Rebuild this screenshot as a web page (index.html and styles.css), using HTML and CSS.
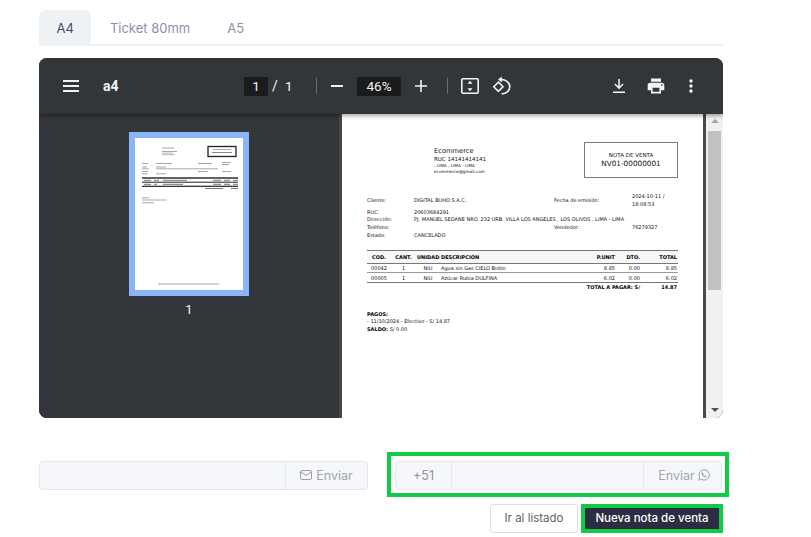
FILE: index.html
```html
<!DOCTYPE html>
<html lang="es">
<head>
    <meta charset="UTF-8">
    <title>Nota de venta</title>
    <link rel="stylesheet" href="styles.css">
</head>
<body>
    <div class="container">
        <div class="tabs">
            <div class="tab active">A4</div>
            <div class="tab">Ticket 80mm</div>
            <div class="tab">A5</div>
        </div>

        <div class="viewer">
            <div class="toolbar">
                <div class="toolbar-left">
                    <svg class="icon-menu" width="24" height="24" viewBox="0 0 24 24"><path fill="#f1f3f4" d="M4 18h16v-2H4v2zm0-5h16v-2H4v2zm0-7v2h16V6H4z"/></svg>
                    <span class="doc-title">a4</span>
                </div>
                <div class="toolbar-center">
                    <span class="num-box page-box">1</span>
                    <span class="slash">/</span>
                    <span class="page-total">1</span>
                    <span class="sep"></span>
                    <svg width="14" height="14" viewBox="0 0 14 14"><path fill="#f1f3f4" d="M1 6h12v2H1z"/></svg>
                    <span class="num-box zoom-box">46%</span>
                    <svg width="14" height="14" viewBox="0 0 14 14"><path fill="#f1f3f4" d="M6.200 1h1.600v5.200H13v1.600H7.800V13H6.200V7.800H1V6.200h5.200z"/></svg>
                    <span class="sep sep-right"></span>
                    <svg class="icon-fit" width="20" height="18" viewBox="0 0 20 18"><rect x="1.800" y="1.800" width="16.400" height="14.400" rx="1.200" fill="none" stroke="#f1f3f4" stroke-width="1.600"/><path fill="#f1f3f4" d="M10 3.800l2.500 3h-5zM10 14.200l-2.500-3h5z"/></svg>
                    <svg class="icon-rotate" width="20" height="20" viewBox="0 0 20 20"><path fill="none" stroke="#f1f3f4" stroke-width="1.600" d="M1.800 10.800l4.600-4.600 4.600 4.600-4.600 4.600z"/><path fill="none" stroke="#f1f3f4" stroke-width="1.600" d="M8 3.800c5.400-.9 9.800 2.500 9.800 7 0 4.200-3.800 7.300-8.300 6.900"/><path fill="#f1f3f4" d="M9.800.6v6L6 3.600z"/></svg>
                </div>
                <div class="toolbar-right">
                    <svg class="icon-download" width="16" height="16" viewBox="0 0 16 16"><path fill="#f1f3f4" d="M7.200 1h1.600v7.200l2.700-2.700 1.100 1.100L8 11.200 3.400 6.600l1.100-1.100 2.700 2.700zM2 13.400h12V15H2z"/></svg>
                    <svg class="icon-print" width="20" height="20" viewBox="0 0 24 24"><path fill="#f1f3f4" d="M19 8H5c-1.660 0-3 1.340-3 3v6h4v4h12v-4h4v-6c0-1.660-1.340-3-3-3zm-3 11H8v-5h8v5zm3-7c-.55 0-1-.45-1-1s.45-1 1-1 1 .45 1 1-.45 1-1 1zm-1-9H6v4h12V3z"/></svg>
                    <svg width="6" height="16" viewBox="0 0 6 16"><circle cx="3" cy="3" r="1.700" fill="#f1f3f4"/><circle cx="3" cy="8" r="1.700" fill="#f1f3f4"/><circle cx="3" cy="13" r="1.700" fill="#f1f3f4"/></svg>
                </div>
            </div>

            <div class="viewer-body">
                <div class="sidebar">
                    <div class="thumb">
                        <svg width="108" height="152" viewBox="0 0 108 152">
                            <g fill="#a8a8a8">
                                <rect x="27" y="9.500" width="12" height="1"/>
                                <rect x="27" y="13" width="15" height="1"/>
                                <rect x="27" y="14.700" width="11" height=".8"/>
                                <rect x="27" y="16.300" width="13" height=".8"/>
                                <rect x="7" y="25" width="6" height="1"/>
                                <rect x="21" y="25" width="16" height="1"/>
                                <rect x="63" y="25" width="14" height="1"/>
                                <rect x="87" y="24" width="9" height="1"/>
                                <rect x="87" y="26" width="7" height="1"/>
                                <rect x="7" y="28.500" width="5" height="1"/>
                                <rect x="21" y="28.500" width="10" height="1"/>
                                <rect x="7" y="30.300" width="7" height="1"/>
                                <rect x="21" y="30.300" width="62" height="1"/>
                                <rect x="7" y="33" width="6" height="1"/>
                                <rect x="63" y="33" width="10" height="1"/>
                                <rect x="87" y="33" width="9" height="1"/>
                                <rect x="7" y="35.300" width="6" height="1"/>
                                <rect x="21" y="35.300" width="10" height="1"/>
                                <rect x="7" y="59.300" width="7" height="1"/>
                                <rect x="7" y="61.500" width="25" height="1"/>
                                <rect x="7" y="64.300" width="12" height="1"/>
                                <rect x="23" y="145.500" width="61" height="1"/>
                            </g>
                            <g fill="#777">
                                <rect x="9" y="41.800" width="7" height="1"/>
                                <rect x="19" y="41.800" width="5" height="1"/>
                                <rect x="28" y="41.800" width="24" height="1"/>
                                <rect x="78" y="41.800" width="8" height="1"/>
                                <rect x="89" y="41.800" width="6" height="1"/>
                                <rect x="98" y="41.800" width="5" height="1"/>
                                <rect x="9" y="45.800" width="7" height="1"/>
                                <rect x="19" y="45.800" width="3" height="1"/>
                                <rect x="28" y="45.800" width="20" height="1"/>
                                <rect x="78" y="45.800" width="8" height="1"/>
                                <rect x="89" y="45.800" width="6" height="1"/>
                                <rect x="98" y="45.800" width="5" height="1"/>
                                <rect x="70" y="50" width="18" height="1"/>
                                <rect x="96" y="50" width="7" height="1"/>
                            </g>
                            <g fill="#222">
                                <rect x="7" y="39.300" width="96" height="1.400"/>
                                <rect x="7" y="43.700" width="96" height="1"/>
                                <rect x="7" y="47.700" width="96" height="1.200"/>
                            </g>
                            <rect x="73" y="8.500" width="28" height="10" fill="#fff" stroke="#222" stroke-width="1.300"/>
                            <rect x="78" y="11" width="18" height="1" fill="#aaa"/>
                            <rect x="77" y="14" width="20" height="1" fill="#888"/>
                        </svg>
                    </div>
                    <div class="thumb-num">1</div>
                </div>

                <div class="doc-area">
                    <div class="doc">
                        <div class="doc-head">
                            <div class="company">
                                <div class="company-name">Ecommerce</div>
                                <div class="company-ruc">RUC 14141414141</div>
                                <div class="company-line">, LIMA , LIMA - LIMA</div>
                                <div class="company-line">ecommerce@gmail.com</div>
                            </div>
                            <div class="doc-box">
                                <div class="doc-box-type">NOTA DE VENTA</div>
                                <div class="doc-box-num">NV01-00000001</div>
                            </div>
                        </div>

                        <table class="info">
                            <tr><td class="c1">Cliente:</td><td class="c2">DIGITAL BUHO S.A.C.</td><td class="c3">Fecha de emisión:</td><td class="c4">2024-10-11 /<br>18:08:53</td></tr>
                            <tr><td>RUC:</td><td colspan="3">20603684291</td></tr>
                            <tr><td>Dirección:</td><td colspan="3">PJ. MANUEL SEOANE NRO. 232 URB. VILLA LOS ANGELES , LOS OLIVOS , LIMA - LIMA</td></tr>
                            <tr><td>Teléfono:</td><td></td><td>Vendedor:</td><td>76279327</td></tr>
                            <tr><td>Estado:</td><td colspan="3">CANCELADO</td></tr>
                        </table>

                        <table class="items">
                            <tr class="items-head"><th class="w-cod">COD.</th><th class="w-cant">CANT.</th><th class="w-uni">UNIDAD</th><th class="left">DESCRIPCIÓN</th><th class="right w-unit">P.UNIT</th><th class="right w-dto">DTO.</th><th class="right w-total">TOTAL</th></tr>
                            <tr><td class="center">00042</td><td class="center">1</td><td class="center">NIU</td><td>Agua sin Gas CIELO Bidón</td><td class="right">8.85</td><td class="right">0.00</td><td class="right">8.85</td></tr>
                            <tr class="last"><td class="center">00005</td><td class="center">1</td><td class="center">NIU</td><td>Azúcar Rubia DULFINA</td><td class="right">6.02</td><td class="right">0.00</td><td class="right">6.02</td></tr>
                            <tr class="total"><td colspan="6" class="right">TOTAL A PAGAR: S/</td><td class="right">14.87</td></tr>
                        </table>

                        <div class="pagos">
                            <div><b>PAGOS:</b></div>
                            <div>- 11/10/2024 - Efectivo - S/ 14.87</div>
                            <div><b>SALDO:</b> S/ 0.00</div>
                        </div>
                    </div>
                    <div class="doc-edge"></div>
                    <div class="scrollbar">
                        <span class="arrow-up"></span>
                        <span class="scroll-thumb"></span>
                        <span class="arrow-down"></span>
                    </div>
                </div>
            </div>
        </div>

        <div class="send-row">
            <div class="input-group mail-group">
                <span class="input-fill"></span>
                <span class="addon addon-btn">
                    <svg width="12" height="10" viewBox="0 0 12 10"><rect x=".5" y=".5" width="11" height="9" rx="1.500" fill="none" stroke="#9a9ea8" stroke-width="1"/><path d="M1 2l5 3.500L11 2" fill="none" stroke="#9a9ea8" stroke-width="1"/></svg>
                    Enviar
                </span>
            </div>
            <div class="highlight">
                <div class="input-group">
                    <span class="addon addon-code">+51</span>
                    <span class="input-fill"></span>
                    <span class="addon addon-btn addon-wa">
                        Enviar
                        <svg width="12" height="12" viewBox="0 0 12 12"><path d="M.8 11.200l.8-2.900a5.200 5.200 0 1 1 2 2.100z" fill="none" stroke="#9a9ea8" stroke-width="1"/><path d="M4.100 3.300c-.7.600-.7 1.500 0 2.600.8 1.200 1.900 2.200 3.100 2.400.8.100 1.300-.4 1.400-1l-1.200-.7-.6.600c-.8-.3-1.400-1-1.800-1.800l.5-.6-.7-1.400z" fill="#9a9ea8"/></svg>
                    </span>
                </div>
            </div>
        </div>

        <div class="actions">
            <button class="btn-plain">Ir al listado</button>
            <div class="btn-frame"><button class="btn-dark">Nueva nota de venta</button></div>
        </div>
    </div>
</body>
</html>
```

FILE: styles.css
```css
html, body {
    margin: 0;
    padding: 0;
    background: #fff;
    overflow: hidden;
}

body {
    font-family: 'Inter', sans-serif;
    color: #333;
}

.container {
    width: 684px;
    margin-left: 39px;
    padding-top: 10px;
}

/* tabs */
.tabs {
    display: flex;
    height: 34px;
    border-bottom: 2px solid #eff1f3;
}

.tab {
    padding: 0 18.500px;
    line-height: 36px;
    font-size: 13px;
    color: #8a92a6;
}

.tab.active {
    padding: 0 17.500px;
    background: #eff2f4;
    border-radius: 6px 6px 0 0;
    color: #3c4a6b;
}

/* pdf viewer */
.viewer {
    margin-top: 12px;
    height: 360px;
    border-radius: 8px;
    overflow: hidden;
    display: flex;
    flex-direction: column;
    background: #33363a;
}

.toolbar {
    height: 56px;
    flex: none;
    background: #323639;
    box-shadow: 0 2px 4px rgba(0, 0, 0, 0.35);
    position: relative;
    z-index: 1;
    display: flex;
    align-items: center;
    color: #f1f3f4;
}

.toolbar-left {
    width: 205px;
    padding-left: 20px;
    box-sizing: border-box;
    display: flex;
    align-items: center;
}

.doc-title {
    margin-left: 20px;
    font-family: 'Roboto', sans-serif;
    font-size: 14px;
    font-weight: 700;
}

.toolbar-center {
    display: flex;
    align-items: center;
}

.num-box {
    background: #191b1c;
    height: 19px;
    line-height: 19px;
    text-align: center;
    font-family: 'Roboto', sans-serif;
    font-size: 13.500px;
}

.page-box {
    width: 24px;
}

.slash {
    margin-left: 4px;
    width: 8px;
    font-family: 'Roboto', sans-serif;
    font-size: 14px;
}

.page-total {
    margin-left: 5px;
    width: 8px;
    font-family: 'Roboto', sans-serif;
    font-size: 13.500px;
}

.sep {
    width: 1px;
    height: 16px;
    background: #6a6d70;
    margin: 0 13px 0 23px;
}

.sep-right {
    margin: 0 12px 0 19px;
}

.zoom-box {
    width: 44px;
    margin: 0 13px;
}

.icon-rotate {
    margin-left: 12px;
}

.toolbar-right {
    margin-left: auto;
    padding-right: 29px;
    display: flex;
    align-items: center;
    gap: 20px;
}

.icon-download {
    margin-right: -1px;
}

.icon-print {
    margin-right: 2px;
}

.viewer-body {
    flex: 1;
    min-height: 0;
    display: flex;
}

.sidebar {
    width: 300px;
    flex: none;
    background: #33363a;
    padding-top: 18px;
    box-sizing: border-box;
    display: flex;
    flex-direction: column;
    align-items: center;
}

.thumb {
    border: 6px solid #8ab4f8;
    width: 108px;
    height: 152px;
    background: #fff;
}

.thumb svg {
    display: block;
    filter: blur(0.4px);
}

.thumb-num {
    margin-top: 6px;
    font-family: 'Roboto', sans-serif;
    font-size: 13px;
    color: #f1f3f4;
}

.doc-area {
    flex: 1;
    display: flex;
    min-width: 0;
    border-left: 3px solid #45484b;
}

.doc {
    width: 361px;
    flex: none;
    height: 304px;
    box-sizing: border-box;
    background: #fff;
    padding: 28px 25px 0 25px;
    font-family: 'DejaVu Sans', sans-serif;
    font-size: 5px;
    color: #111;
    overflow: hidden;
}

.doc-edge {
    width: 3px;
    flex: none;
    background: #47494c;
}

/* the printed document */
.doc-head {
    display: flex;
    justify-content: space-between;
    height: 35px;
    margin-bottom: 16px;
}

.company {
    margin-left: 67px;
    padding-top: 5px;
}

.company-name {
    font-size: 6.700px;
    line-height: 8px;
}

.company-ruc {
    font-size: 5.500px;
    line-height: 8px;
}

.company-line {
    font-size: 4.200px;
    line-height: 5.500px;
}

.doc-box {
    width: 92px;
    border: 1px solid #777;
    text-align: center;
    padding-top: 8px;
    height: 26px;
}

.doc-box-type {
    font-size: 5.500px;
    line-height: 8px;
}

.doc-box-num {
    font-size: 7.300px;
    line-height: 10px;
}

.info {
    width: 311px;
    border-collapse: collapse;
    table-layout: fixed;
    font-size: 5px;
}

.info td {
    padding: 0;
    line-height: 7.800px;
    vertical-align: middle;
    white-space: nowrap;
}

.info .c1 { width: 47px; }
.info .c2 { width: 140px; }
.info .c3 { width: 78px; }

.items {
    width: 311px;
    margin-top: 10px;
    border-collapse: collapse;
    table-layout: fixed;
    font-size: 5px;
}

.items th, .items td {
    padding: 0 1px;
    height: 8.500px;
    white-space: nowrap;
}

.items-head th {
    height: 12px;
    background: #f7f7f7;
    border-top: 1px solid #777;
    border-bottom: 1px solid #777;
    text-align: center;
    color: #000;
}

.items tr td {
    border-bottom: 1px solid #999;
}

.items .last td {
    border-bottom: 1px solid #777;
}

.items .total td {
    height: 8px;
    border: 0;
    font-weight: 700;
    color: #000;
}

.w-cod { width: 22px; }
.w-cant { width: 23px; }
.w-uni { width: 22px; }
.w-unit { width: 38px; }
.w-dto { width: 23px; }
.w-total { width: 35px; }

.items .left { text-align: left; }
.items .right { text-align: right; }
.items .center { text-align: center; }

.pagos {
    margin-top: 20px;
    line-height: 7.500px;
}

.pagos b {
    color: #000;
}

.scrollbar {
    flex: 1;
    background: #f1f1f1;
    display: flex;
    flex-direction: column;
    align-items: center;
    padding-top: 5px;
    box-sizing: border-box;
}

.arrow-up {
    border-left: 4px solid transparent;
    border-right: 4px solid transparent;
    border-bottom: 4px solid #a3a3a3;
}

.scroll-thumb {
    width: 13px;
    height: 159px;
    margin-top: 8px;
    background: #c1c1c1;
}

.arrow-down {
    margin-top: auto;
    margin-bottom: 6px;
    border-left: 4px solid transparent;
    border-right: 4px solid transparent;
    border-top: 4px solid #505050;
}

/* bottom forms */
.send-row {
    margin-top: 34px;
    display: flex;
    justify-content: space-between;
    align-items: flex-start;
    margin-right: -6px;
}

.input-group {
    display: flex;
    height: 29px;
    box-sizing: border-box;
    background: #f5f7fa;
    border: 1px solid #e4e7ed;
    border-radius: 4px;
    font-size: 12.500px;
    color: #a0a4ad;
}

.mail-group {
    width: 329px;
    margin-top: 9px;
}

.input-fill {
    flex: 1;
}

.addon {
    display: flex;
    align-items: center;
    justify-content: center;
    gap: 4px;
    box-sizing: border-box;
    padding-bottom: 1px;
}

.addon-btn {
    width: 82px;
    border-left: 1px solid #e4e7ed;
}

.addon-wa {
    width: 78px;
    gap: 3px;
    padding-left: 3px;
}

.addon-code {
    width: 56px;
    border-right: 1px solid #e4e7ed;
    color: #90939a;
}

.highlight {
    width: 342px;
    box-sizing: border-box;
    border: 4px solid #0fcb45;
    padding: 5px 3px 3px 4px;
}

.actions {
    margin-top: 7px;
    display: flex;
    justify-content: flex-end;
    align-items: center;
    gap: 3px;
}

.btn-plain {
    width: 88px;
    height: 29px;
    background: #fff;
    border: 1px solid #dcdfe6;
    border-radius: 3px;
    font-family: 'Inter', sans-serif;
    font-size: 11.500px;
    color: #606266;
    padding: 0 0 1px;
}

.btn-frame {
    border: 4px solid #0fcb45;
}

.btn-dark {
    display: block;
    width: 134px;
    height: 21px;
    background: #2a2d43;
    border: 0;
    font-family: 'Inter', sans-serif;
    font-size: 11.500px;
    font-weight: 500;
    color: #fff;
    padding: 0 0 1px;
}
```
